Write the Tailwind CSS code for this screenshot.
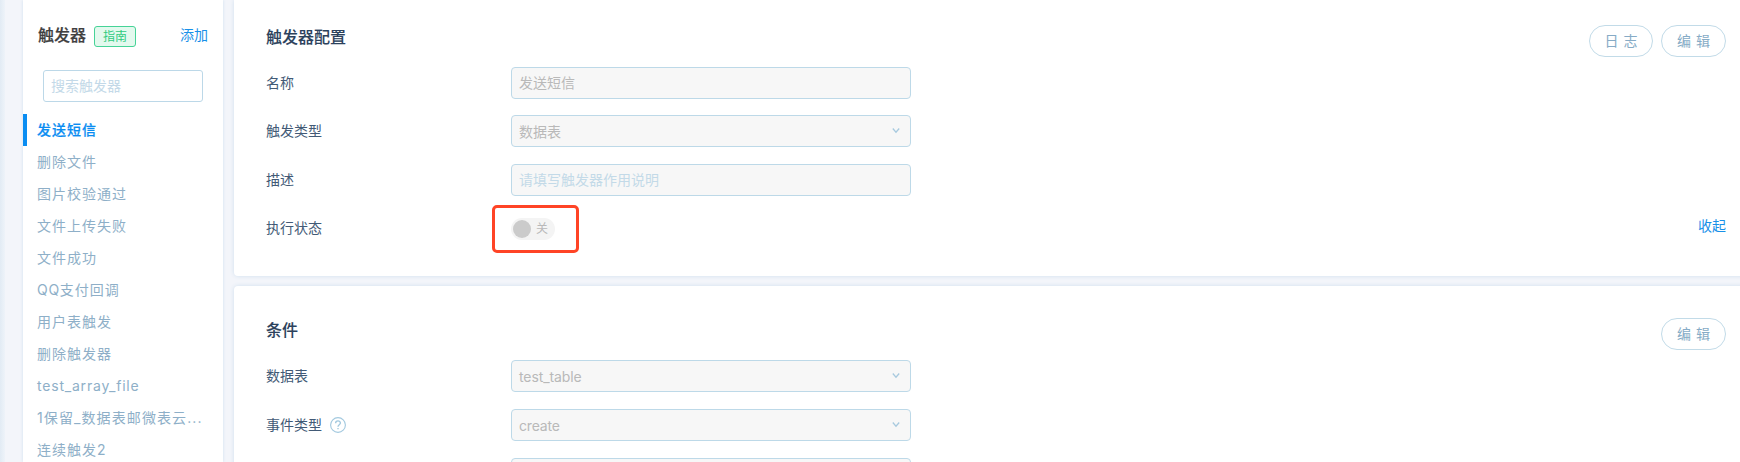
<!DOCTYPE html>
<html lang="zh-CN">
<head>
<meta charset="utf-8">
<title>触发器</title>
<script src="https://cdn.jsdelivr.net/npm/@tailwindcss/browser@4"></script>
</head>
<body class="h-[462px] w-[1740px] overflow-hidden bg-[#f3f5fa] font-['Inter','Noto_Sans_CJK_SC',sans-serif] text-sm text-[#425a76]">
<div class="flex h-[462px] overflow-hidden">
  <div class="w-[5px] shrink-0 bg-linear-to-r from-[#e2ebf4] to-[#eef3f9]"></div>
  <aside class="ml-[18px] w-[200px] shrink-0 bg-white shadow-[0_0_3px_#cfdfee]">
    <div class="flex h-[70px] pr-[15px] pl-[15px] pt-[25px]">
      <h2 class="text-base leading-[21px] font-medium text-[#404040] [-webkit-text-stroke:0.2px]">触发器</h2>
      <span class="mt-px ml-2 flex h-[21px] w-[42px] items-center justify-center rounded-[3px] border border-[#46d397] bg-[#e3f9ee] text-xs text-[#2fcb7e]">指南</span>
      <a class="ml-auto leading-[20px] text-[#1890e8]">添加</a>
    </div>
    <div class="ml-5 flex h-8 w-40 items-center rounded-[3px] border border-[#bcd8e8] px-[7px] text-[#c3d9e8]">搜索触发器</div>
    <ul class="mt-3 leading-8 tracking-[1px] text-[#8eafc8]">
      <li class="h-8 border-l-4 border-[#0a8df2] pl-[10px] font-medium text-[#0a8df2] [-webkit-text-stroke:0.2px]">发送短信</li>
      <li class="h-8 pl-[14px]">删除文件</li>
      <li class="h-8 pl-[14px]">图片校验通过</li>
      <li class="h-8 pl-[14px]">文件上传失败</li>
      <li class="h-8 pl-[14px]">文件成功</li>
      <li class="h-8 pl-[14px]"><span class="tracking-[0.7px]">QQ</span>支付回调</li>
      <li class="h-8 pl-[14px]">用户表触发</li>
      <li class="h-8 pl-[14px]">删除触发器</li>
      <li class="h-8 pl-[14px] tracking-[0.8px]">test_array_file</li>
      <li class="h-8 pl-[14px] whitespace-nowrap tracking-[1.1px]">1保留_数据表邮微表云...</li>
      <li class="h-8 pl-[14px]">连续触发2</li>
    </ul>
  </aside>
  <main class="ml-[11px] flex w-[1520px] shrink-0 flex-col gap-[10px]">
    <section class="flex h-[276px] shrink-0 justify-between rounded-b-[4px] bg-white pr-[28px] pl-8 shadow-[0_0_4px_#cfdfee]">
      <div>
        <h3 class="mt-[25px] h-[42px] text-base leading-6 font-medium text-[#2c425c] [-webkit-text-stroke:0.1px]">触发器配置</h3>
        <div class="flex h-8 items-center">
          <span class="w-[245px]">名称</span>
          <div class="flex h-8 w-[400px] items-center rounded-[4px] border border-[#bdd9e8] bg-[#f7f7f7] px-[7px] text-[#b9b9b9]">发送短信</div>
        </div>
        <div class="mt-4 flex h-8 items-center">
          <span class="w-[245px]">触发类型</span>
          <div class="flex h-8 w-[400px] items-center justify-between rounded-[4px] border border-[#bdd9e8] bg-[#f7f7f7] pr-[10px] pl-[7px] text-[#b9b9b9]"><span class="pt-px">数据表</span>
            <svg class="h-2 w-2" viewBox="0 0 8 8" fill="none" stroke="#a8cadf" stroke-width="1.3"><path d="M.8 1.5 4 5.2 7.2 1.5"/></svg></div>
        </div>
        <div class="mt-[17px] flex h-8 items-center">
          <span class="w-[245px]">描述</span>
          <div class="flex h-8 w-[400px] items-center rounded-[4px] border border-[#bdd9e8] bg-[#f7f7f7] px-[7px] text-[#c3dae8]">请填写触发器作用说明</div>
        </div>
        <div class="mt-4 flex h-8 items-center">
          <span class="w-[245px]">执行状态</span>
          <div class="relative mt-px flex h-[22px] w-11 items-center rounded-full bg-[#f4f4f4] pl-[2px] text-xs text-[#b9b9b9]">
            <span class="h-[18px] w-[18px] rounded-full bg-[#cbcbcb]"></span><span class="ml-[5px]">关</span>
            <div class="absolute -top-[13px] -left-[19px] h-[48px] w-[87px] rounded-[5px] border-3 border-[#ff4426]"></div>
          </div>
        </div>
      </div>
      <div class="flex flex-col items-end justify-between pt-[25px] pb-[40px]">
        <div class="flex gap-2 text-[#86abc6]">
          <button class="h-8 w-16 rounded-full border border-[#c2dbe8] [word-spacing:1px]">日 志</button>
          <button class="h-8 w-[65px] rounded-full border border-[#c2dbe8] [word-spacing:1px]">编 辑</button>
        </div>
        <a class="leading-5 text-[#1890e8]">收起</a>
      </div>
    </section>
    <section class="flex h-[300px] shrink-0 justify-between rounded-[4px] bg-white pr-[28px] pl-8 shadow-[0_0_4px_#cfdfee]">
      <div>
        <h3 class="mt-8 h-[42px] text-base leading-6 font-medium text-[#2c425c] [-webkit-text-stroke:0.1px]">条件</h3>
        <div class="flex h-8 items-center">
          <span class="w-[245px]">数据表</span>
          <div class="flex h-8 w-[400px] items-center justify-between rounded-[4px] border border-[#bdd9e8] bg-[#f7f7f7] pr-[10px] pl-[7px] text-[#b9b9b9]"><span class="pt-px tracking-[-0.1px]">test_table</span>
            <svg class="h-2 w-2" viewBox="0 0 8 8" fill="none" stroke="#a8cadf" stroke-width="1.3"><path d="M.8 1.5 4 5.2 7.2 1.5"/></svg></div>
        </div>
        <div class="mt-[17px] flex h-8 items-center">
          <div class="flex w-[245px] items-center gap-2">事件类型
            <svg class="h-4 w-4" viewBox="0 0 16 16" fill="none" stroke="#a3c9df" stroke-width="1.1"><circle cx="8" cy="8" r="7.4"/><path stroke-width="1.4" d="M5.6 6.3C5.6 3.1 10.4 3.2 10.4 6.1 10.4 7.7 8 7.8 8 9.7M8 10.9v1.4"/></svg></div>
          <div class="flex h-8 w-[400px] items-center justify-between rounded-[4px] border border-[#bdd9e8] bg-[#f7f7f7] pr-[10px] pl-[7px] text-[#b9b9b9]"><span class="pt-px tracking-[-0.2px]">create</span>
            <svg class="h-2 w-2" viewBox="0 0 8 8" fill="none" stroke="#a8cadf" stroke-width="1.3"><path d="M.8 1.5 4 5.2 7.2 1.5"/></svg></div>
        </div>
        <div class="mt-[17px] ml-[245px] h-8 w-[400px] rounded-[4px] border border-[#bdd9e8] bg-[#f7f7f7]"></div>
      </div>
      <div class="pt-8 text-[#86abc6]">
        <button class="h-8 w-[65px] rounded-full border border-[#c2dbe8] [word-spacing:1px]">编 辑</button>
      </div>
    </section>
  </main>
</div>
</body>
</html>
